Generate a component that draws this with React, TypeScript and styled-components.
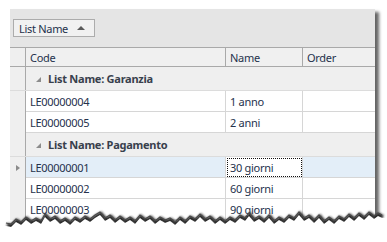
import React from "react";
import styled, { createGlobalStyle } from "styled-components";

const GlobalStyle = createGlobalStyle`
  html, body {
    margin: 0;
    padding: 0;
    background: #ffffff;
  }
  body {
    font-family: "Noto Sans", "Open Sans", sans-serif;
    font-size: 11px;
    color: #25324c;
    overflow: hidden;
  }
`;

const Page = styled.div`
  position: relative;
  width: 387px;
  height: 242px;
  padding: 9px 0 0 10px;
  box-sizing: border-box;
`;

const Window = styled.div`
  width: 365px;
  height: 220px;
  background: #ffffff;
  box-shadow: 4px 3px 3px rgba(0, 0, 0, 0.6);
  overflow: hidden;
`;

const GroupPanel = styled.div`
  height: 38px;
  background: #e5e5e5;
  display: flex;
  align-items: flex-start;
  padding: 10px 0 0 3px;
  box-sizing: border-box;
`;

const GroupButton = styled.div`
  height: 18px;
  width: 82px;
  box-sizing: border-box;
  border: 1px solid #acacac;
  background: #f1f1f1;
  display: flex;
  align-items: center;
  justify-content: space-between;
  padding: 0 9px 0 5px;
  letter-spacing: -0.3px;
`;

const SortArrow = styled.span`
  width: 0;
  height: 0;
  border-left: 4px solid transparent;
  border-right: 4px solid transparent;
  border-bottom: 4px solid #5a5a5a;
`;

const columns = "16px 200px 77px 72px";

const HeaderRow = styled.div`
  display: grid;
  grid-template-columns: ${columns};
  height: 20px;
  box-sizing: border-box;
  border-top: 1px solid #a9a9a9;
  border-bottom: 1px solid #a9a9a9;
  background: #f0f0f0;
`;

const HeaderCell = styled.div<{ $last?: boolean }>`
  border-right: ${({ $last }) => ($last ? "none" : "1px solid #a9a9a9")};
  padding-left: 4px;
  display: flex;
  align-items: center;
  letter-spacing: -0.3px;
`;

const Indicator = styled.div`
  background: #efefef;
  border-right: 1px solid #a9a9a9;
  display: flex;
  align-items: center;
  justify-content: center;
`;

const RowArrow = styled.span`
  width: 0;
  height: 0;
  border-top: 3px solid transparent;
  border-bottom: 3px solid transparent;
  border-left: 4px solid #8a8a8a;
`;

const GroupRow = styled.div`
  display: grid;
  grid-template-columns: 16px 1fr;
  height: 24px;
  box-sizing: border-box;
  background: #efefef;
  border-bottom: 1px solid #dcdcdc;
`;

const GroupLabel = styled.div`
  display: flex;
  align-items: center;
  gap: 7px;
  padding-left: 10px;
  font-weight: bold;
  letter-spacing: -0.25px;
  color: #38404c;
`;

const Expander = styled.span`
  width: 0;
  height: 0;
  border-left: 5px solid transparent;
  border-bottom: 5px solid #8c8c8c;
  margin-top: 1px;
`;

const DataRow = styled.div<{ $selected?: boolean }>`
  display: grid;
  grid-template-columns: ${columns};
  height: 21px;
  box-sizing: border-box;
  background: ${({ $selected }) => ($selected ? "#e3eef8" : "#ffffff")};
`;

const Cell = styled.div<{ $focused?: boolean; $last?: boolean }>`
  border-bottom: 1px solid #d6d6d6;
  border-right: ${({ $last }) => ($last ? "none" : "1px solid #d6d6d6")};
  padding-left: 4px;
  display: flex;
  align-items: center;
  letter-spacing: -0.3px;
  ${({ $focused }) =>
    $focused &&
    `
    background: #ffffff;
    outline: 1px dotted #111111;
    outline-offset: -2px;
  `}
`;

type Item = { code: string; name: string; selected?: boolean };
type Group = { title: string; items: Item[] };

const groups: Group[] = [
  {
    title: "List Name: Garanzia",
    items: [
      { code: "LE00000004", name: "1 anno" },
      { code: "LE00000005", name: "2 anni" },
    ],
  },
  {
    title: "List Name: Pagamento",
    items: [
      { code: "LE00000001", name: "30 giorni", selected: true },
      { code: "LE00000002", name: "60 giorni" },
      { code: "LE00000003", name: "90 giorni" },
    ],
  },
];

const TornEdge = styled.svg`
  position: absolute;
  left: 0;
  top: 0;
  pointer-events: none;
`;

// jagged bottom edge of the "torn paper" screenshot
const jag: [number, number][] = [
  [6, 223], [11, 224], [16, 219], [21, 222], [26, 217], [31, 221], [36, 218],
  [41, 221], [45, 214], [50, 219], [55, 216], [60, 221], [65, 218], [70, 222],
  [75, 217], [80, 220], [85, 216], [90, 219], [95, 215], [100, 212], [105, 218],
  [110, 215], [115, 220], [120, 216], [125, 220], [130, 217], [135, 221],
  [140, 215], [145, 219], [150, 216], [155, 221], [160, 217], [165, 220],
  [170, 218], [175, 222], [180, 217], [185, 221], [190, 216], [195, 219],
  [200, 214], [205, 219], [210, 216], [215, 221], [220, 217], [225, 221],
  [230, 217], [235, 220], [240, 215], [245, 218], [249, 213], [254, 219],
  [259, 216], [264, 220], [269, 215], [274, 221], [279, 217], [284, 220],
  [289, 215], [294, 218], [299, 212], [304, 218], [309, 215], [314, 220],
  [319, 215], [324, 221], [329, 217], [334, 221], [339, 216], [344, 219],
  [349, 214], [354, 218], [359, 213], [364, 217], [369, 212], [374, 216],
  [378, 213], [382, 215],
];

const jagLine = jag.map(([x, y]) => `${x},${y}`).join(" ");
const jagFill = `M0,242 L0,${jag[0][1]} L${jagLine.replace(/ /g, " L")} L387,215 L387,242 Z`;

export default function App() {
  return (
    <>
      <GlobalStyle />
      <Page>
        <Window>
          <GroupPanel>
            <GroupButton>
              List Name
              <SortArrow />
            </GroupButton>
          </GroupPanel>
          <HeaderRow>
            <Indicator />
            <HeaderCell>Code</HeaderCell>
            <HeaderCell>Name</HeaderCell>
            <HeaderCell $last>Order</HeaderCell>
          </HeaderRow>
          {groups.map((g) => (
            <React.Fragment key={g.title}>
              <GroupRow>
                <Indicator />
                <GroupLabel>
                  <Expander />
                  {g.title}
                </GroupLabel>
              </GroupRow>
              {g.items.map((it) => (
                <DataRow key={it.code} $selected={it.selected}>
                  <Indicator>{it.selected && <RowArrow />}</Indicator>
                  <Cell>{it.code}</Cell>
                  <Cell $focused={it.selected}>{it.name}</Cell>
                  <Cell $last />
                </DataRow>
              ))}
            </React.Fragment>
          ))}
        </Window>
        <TornEdge width="387" height="242" viewBox="0 0 387 242">
          <defs>
            <filter id="tornBlur" x="-5%" y="-50%" width="110%" height="200%">
              <feGaussianBlur stdDeviation="1.3" />
            </filter>
          </defs>
          <polyline
            points={jagLine}
            fill="none"
            stroke="#222222"
            strokeWidth="4"
            filter="url(#tornBlur)"
            transform="translate(1,2)"
          />
          <path d={jagFill} fill="#ffffff" transform="translate(0,3)" />
          <polyline points={jagLine} fill="none" stroke="#4a4a4a" strokeWidth="1.2" />
        </TornEdge>
      </Page>
    </>
  );
}
